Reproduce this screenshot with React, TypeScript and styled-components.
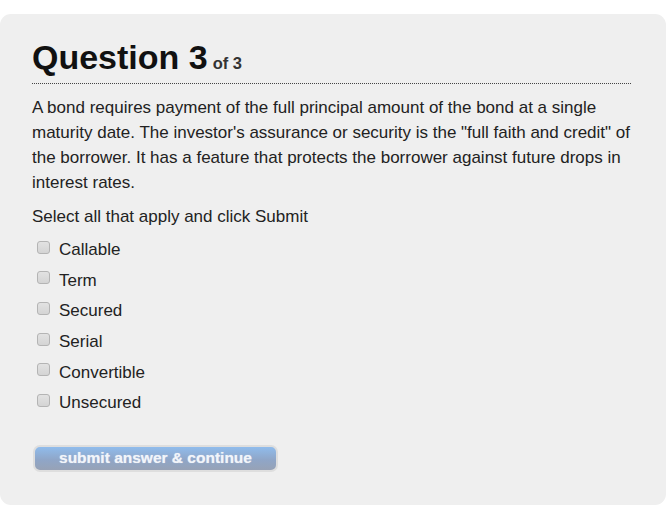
import React from "react";
import styled, { createGlobalStyle } from "styled-components";

const Global = createGlobalStyle`
  html, body { margin: 0; padding: 0; background: #ffffff; }
  body { font-family: "Liberation Sans", Arial, sans-serif; }
`;

const Card = styled.div`
  margin-top: 14px;
  width: 666px;
  height: 491px;
  box-sizing: border-box;
  background: #efefef;
  border-radius: 11px;
  padding: 23px 20px 0 32px;
  color: #222;
`;

const Title = styled.h1`
  margin: 0 15px 0 0;
  padding-bottom: 0;
  border-bottom: 1px dotted #444;
  font-size: 34px;
  font-weight: bold;
  line-height: 40px;
  color: #111;
`;

const Sub = styled.span`
  font-size: 16.5px;
  margin-left: 5px;
  color: #333;
`;

const Prose = styled.p`
  margin: 11px 0 0;
  font-size: 17px;
  line-height: 25px;
  color: #222;
`;

const Prompt = styled.p`
  margin: 11px 0 7px;
  font-size: 17px;
  line-height: 22px;
`;

const Options = styled.div`
  display: flex;
  flex-direction: column;
`;

const Option = styled.label`
  display: flex;
  align-items: center;
  height: 30.6px;
  font-size: 17px;
`;

const Box = styled.input`
  appearance: none;
  -webkit-appearance: none;
  box-sizing: border-box;
  margin: 0 9px 0 5px;
  width: 13px;
  height: 13px;
  border: 1px solid #b4b4b4;
  border-radius: 3px;
  background: linear-gradient(#e2e2e2, #d4d4d4);
  position: relative;
  top: -3px;
`;

const Button = styled.button`
  display: block;
  margin-top: 26px;
  margin-left: 1px;
  width: 245px;
  height: 27px;
  border: 2px solid #dedede;
  border-radius: 7px;
  background: linear-gradient(#90bcec, #8fa6c8 55%, #97a2b6);
  color: #f2f5fa;
  font-family: "Liberation Sans", Arial, sans-serif;
  font-weight: bold;
  font-size: 15.5px;
  padding: 0 0 1px;
  text-shadow: 0 0 1px rgba(255, 255, 255, 0.6);
  cursor: pointer;
`;

const options = ["Callable", "Term", "Secured", "Serial", "Convertible", "Unsecured"];

export default function App() {
  return (
    <>
      <Global />
      <Card>
        <Title>
          Question 3<Sub>of 3</Sub>
        </Title>
        <Prose>
          A bond requires payment of the full principal amount of the bond at a single
          maturity date. The investor's assurance or security is the "full faith and credit" of
          the borrower. It has a feature that protects the borrower against future drops in
          interest rates.
        </Prose>
        <Prompt>Select all that apply and click Submit</Prompt>
        <Options>
          {options.map((o) => (
            <Option key={o}>
              <Box type="checkbox" />
              {o}
            </Option>
          ))}
        </Options>
        <Button>submit answer &amp; continue</Button>
      </Card>
    </>
  );
}
